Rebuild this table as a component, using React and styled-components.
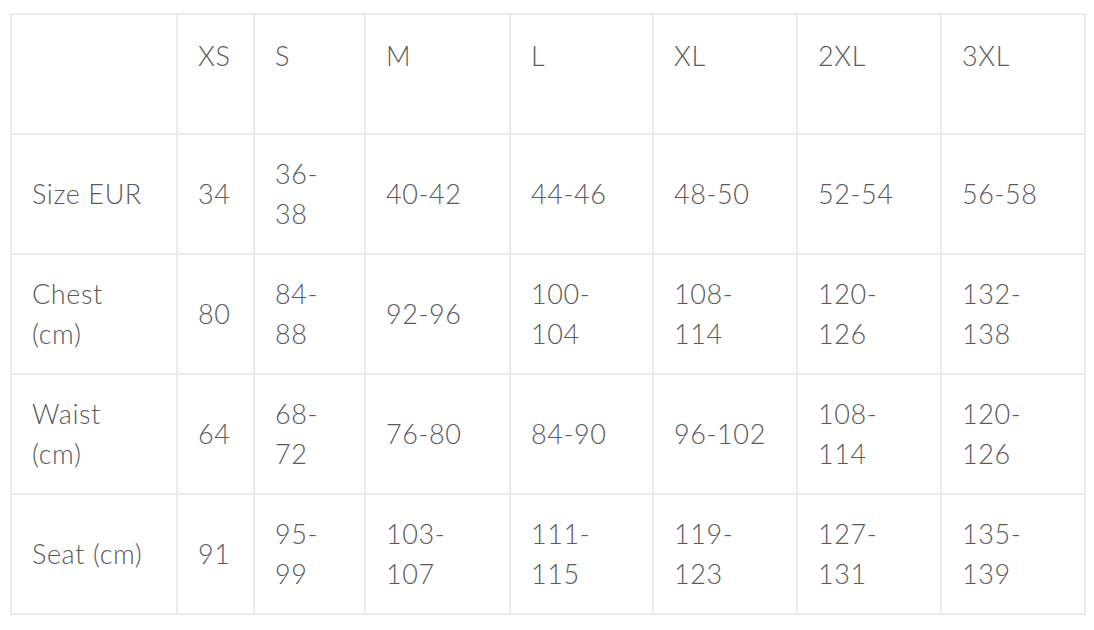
import React from 'react';
import styled, { createGlobalStyle } from 'styled-components';

const GlobalStyle = createGlobalStyle`
	body {
		margin: 0;
		background: #fff;
	}
`;

const Page = styled.div`
	padding: 13px 10px 0 10px;
`;

const Table = styled.table`
	width: 1076px;
	table-layout: fixed;
	border-collapse: separate;
	border-spacing: 0;
	border: 1px solid #ebebeb;
	font-family: 'Lato', 'Noto Sans', sans-serif;
	font-size: 27px;
	line-height: 40px;
	letter-spacing: 0.6px;
	color: #5a5a5a;
`;

const Cell = styled.td`
	box-sizing: border-box;
	height: 120px;
	border: 1px solid #ebebeb;
	padding: 0 20px;
	text-align: left;
	font-weight: 300;
	white-space: pre;
	vertical-align: ${({ head }) => (head ? 'top' : 'middle')};
	padding-top: ${({ head }) => (head ? '21px' : '0')};
`;

const widths = [166, 77, 111, 145, 143, 144, 144, 144];
const sizes = ['', 'XS', 'S', 'M', 'L', 'XL', '2XL', '3XL'];

const rows = [
	['Size EUR', '34', '36-\n38', '40-42', '44-46', '48-50', '52-54', '56-58'],
	['Chest\n(cm)', '80', '84-\n88', '92-96', '100-\n104', '108-\n114', '120-\n126', '132-\n138'],
	['Waist\n(cm)', '64', '68-\n72', '76-80', '84-90', '96-102', '108-\n114', '120-\n126'],
	['Seat (cm)', '91', '95-\n99', '103-\n107', '111-\n115', '119-\n123', '127-\n131', '135-\n139'],
];

const App = () => {
	return (
		<Page>
			<GlobalStyle />
			<Table>
				<colgroup>
					{widths.map((w, i) => (
						<col key={i} style={{ width: w }} />
					))}
				</colgroup>
				<thead>
					<tr>
						{sizes.map((s, i) => (
							<Cell as='th' head key={i}>{s}</Cell>
						))}
					</tr>
				</thead>
				<tbody>
					{rows.map((row, r) => (
						<tr key={r}>
							{row.map((v, i) => (
								<Cell key={i}>{v}</Cell>
							))}
						</tr>
					))}
				</tbody>
			</Table>
		</Page>
	);
};

export default App;
